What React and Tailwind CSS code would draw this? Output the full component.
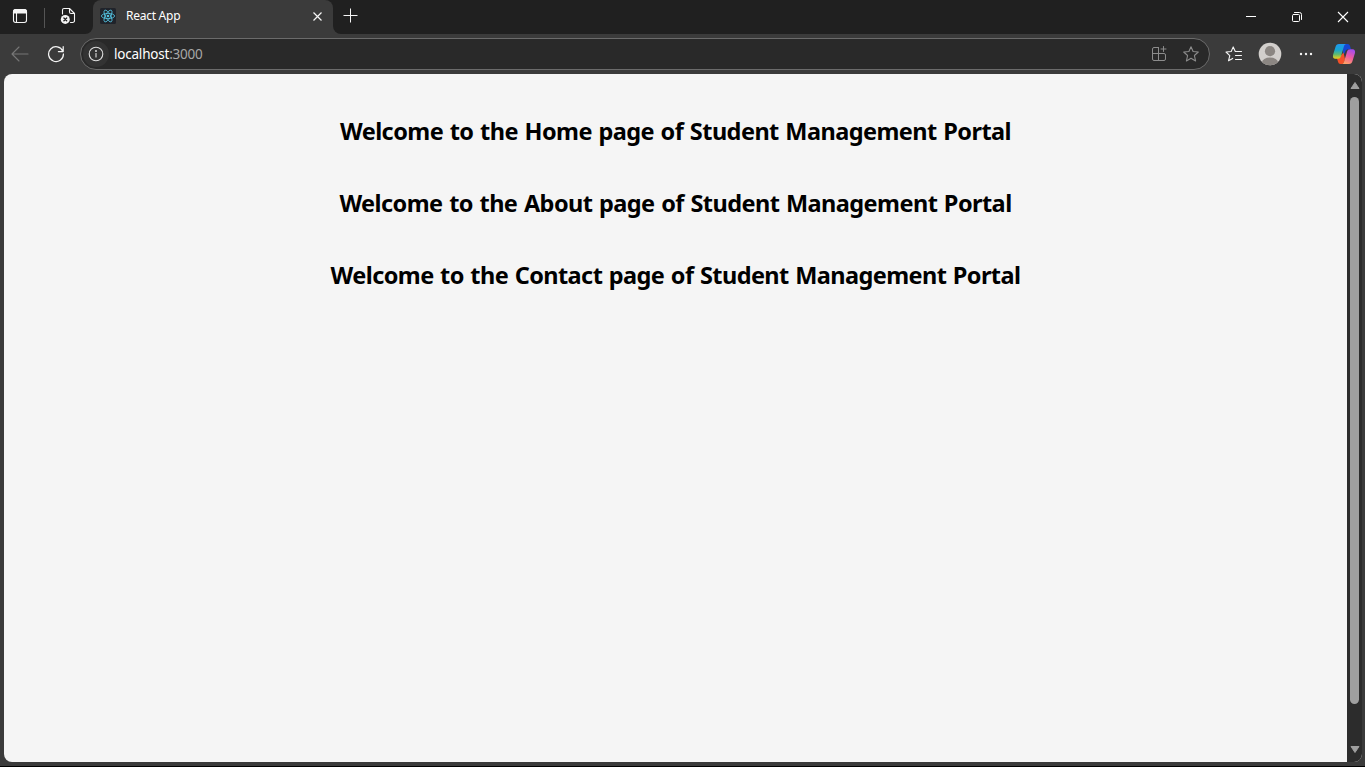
import React from "react";

const line = { fill: "none", strokeLinecap: "round", strokeLinejoin: "round" };

function WorkspacesIcon() {
  return (
    <svg width="16" height="16" viewBox="0 0 16 16" {...line} stroke="#f5f5f5" strokeWidth="1.1">
      <rect x="1.5" y="1.5" width="13" height="13" rx="2.2" />
      <path d="M1.5 5V3.7a2.2 2.2 0 0 1 2.2-2.2h8.6a2.2 2.2 0 0 1 2.2 2.2V5z" fill="#f5f5f5" />
      <path d="M4.5 5v9.5" />
    </svg>
  );
}

function TabActionsIcon() {
  return (
    <svg width="16" height="18" viewBox="0 0 16 18" {...line} stroke="#f5f5f5" strokeWidth="1.1">
      <path d="M2.5 7V3A1.5 1.5 0 0 1 4 1.5h5.5l5 5v7.2a1.8 1.8 0 0 1-1.8 1.8H10.5M9.5 1.5V5A1.5 1.5 0 0 0 11 6.5h3.5" />
      <circle cx="5.3" cy="12.4" r="4.5" fill="#f5f5f5" stroke="none" />
      <path d="M3.9 11l2.800 2.800M6.700 11l-2.800 2.800" stroke="#202020" strokeWidth="1.300" />
    </svg>
  );
}

function ReactLogo() {
  return (
    <svg width="16" height="16" viewBox="0 0 16 16" fill="none" stroke="#53c1de" strokeWidth="0.85">
      <rect width="16" height="16" rx="1.5" fill="#20232a" stroke="none" />
      <ellipse cx="8" cy="8" rx="6.600" ry="2.600" />
      <ellipse cx="8" cy="8" rx="6.600" ry="2.600" transform="rotate(60 8 8)" />
      <ellipse cx="8" cy="8" rx="6.600" ry="2.600" transform="rotate(120 8 8)" />
      <circle cx="8" cy="8" r="1.300" fill="#53c1de" stroke="none" />
    </svg>
  );
}

function CopilotLogo() {
  return (
    <svg width="24" height="22" viewBox="0 0 24 22">
      <defs>
        <linearGradient id="cool" x1="0" y1="0" x2="0" y2="1">
          <stop offset="0" stopColor="#2098f0" />
          <stop offset="0.400" stopColor="#18a5cf" />
          <stop offset="0.700" stopColor="#61b96e" />
          <stop offset="1" stopColor="#f5cf18" />
        </linearGradient>
        <linearGradient id="warm" x1="0.700" y1="0" x2="0.300" y2="1">
          <stop offset="0" stopColor="#a24cf0" />
          <stop offset="0.500" stopColor="#ee5aa0" />
          <stop offset="1" stopColor="#ffa264" />
        </linearGradient>
      </defs>
      <path d="M11 1h4.600c1.400 0 2 .8 2.400 2l1 3.200h-2.600c-1.900 0-2.700 1-3.300 2.700L11 13z" fill="#1646d2" />
      <path d="M6.500 15l5-5.500L13 16l-1.200 3.400c-.4 1.100-1 1.600-2.200 1.600H8.500c-1.400 0-2-.7-2.400-2L5 15.500z" fill="#f45028" />
      <path d="M7 1h7c-1.300.3-1.800 1.500-2.200 2.800L9 13.300C8.500 15 7.500 15.800 5.800 15.800H3.500C1.300 15.800.5 14 1.100 11.700L3.400 4.200C4 2 5.100 1 7 1z" fill="url(#cool)" />
      <path d="M17 21h-7c1.300-.3 1.800-1.500 2.200-2.800L15 8.700c.5-1.700 1.500-2.500 3.200-2.500h2.300c2.200 0 3 1.800 2.400 4.100l-2.300 7.500C20 20 18.900 21 17 21z" fill="url(#warm)" />
    </svg>
  );
}

function TitleBar() {
  return (
    <header className="flex h-[34px] shrink-0 bg-[#3b3b3b]">
      <div className="flex w-[93px] items-center rounded-br-lg bg-[#202020] pb-[2px] pl-3">
        <WorkspacesIcon />
        <div className="ml-4 mt-[3px] h-[20px] w-px bg-[#555555]" />
        <div className="ml-[15px]"><TabActionsIcon /></div>
      </div>
      <div className="w-[240px] bg-[#202020]">
        <div className="flex h-full items-center rounded-t-lg bg-[#3b3b3b] pb-[2px] pl-[7px] pr-[10px]">
          <ReactLogo />
          <span className="ml-[10px] text-[12px] leading-4 tracking-[-0.26px] text-white">React App</span>
          <svg className="ml-auto mt-px" width="11" height="11" viewBox="0 0 11 11" stroke="#f5f5f5" strokeWidth="1.200">
            <path d="M1.500 1.500l8 8M9.500 1.500l-8 8" />
          </svg>
        </div>
      </div>
      <div className="flex flex-1 rounded-bl-lg bg-[#202020] pl-[10px]">
        <svg className="mt-[8px]" width="15" height="15" viewBox="0 0 15 15" stroke="#f5f5f5" strokeWidth="1">
          <path d="M.5 7.500h14M7.500.5v14" />
        </svg>
        <div className="-mr-px ml-auto flex">
          <div className="flex w-[46px] justify-center pt-[16px]">
            <div className="h-px w-[10px] bg-white" />
          </div>
          <div className="flex w-[46px] justify-center pt-[11px]">
            <svg width="12" height="12" viewBox="0 0 12 12" {...line} stroke="#fff">
              <rect x="1.500" y="3.500" width="7" height="7" rx="1" />
              <path d="M3.500 1.500h5a2 2 0 0 1 2 2v5" />
            </svg>
          </div>
          <div className="flex w-[46px] justify-center pt-[11px]">
            <svg width="12" height="12" viewBox="0 0 12 12" stroke="#fff" strokeWidth="1.100">
              <path d="M1 1l10 10M11 1L1 11" />
            </svg>
          </div>
        </div>
      </div>
    </header>
  );
}

function Toolbar() {
  return (
    <div className="flex h-10 shrink-0 items-center bg-[#3b3b3b]">
      <svg className="ml-[11px]" width="18" height="16" viewBox="0 0 18 16" {...line} stroke="#777777" strokeWidth="1.100">
        <path d="M8 1L1 8l7 7M1 8h16" />
      </svg>
      <svg className="ml-[18px]" width="18" height="18" viewBox="0 0 18 18" {...line} stroke="#f5f5f5" strokeWidth="1.250">
        <path d="M15.800 6.200A7.400 7.400 0 1 0 16.400 9M16.200 1.700v4.800h-4.800" />
      </svg>
      <div className="ml-[15px] flex h-8 w-[1130px] items-center rounded-full border border-[#6b6b6b] bg-[#292929] pl-[2px] pr-[10px]">
        <div className="flex size-[26px] items-center justify-center rounded-full bg-[#333333]">
          <svg width="16" height="16" viewBox="0 0 16 16" {...line} stroke="#dedede" strokeWidth="1.100">
            <circle cx="8" cy="8" r="6.800" />
            <path d="M8 7.500v3.500" />
            <circle cx="8" cy="5" r=".4" fill="#dedede" />
          </svg>
        </div>
        <div className="ml-[5px] text-[13.5px] leading-5 tracking-[-0.21px] text-white">
          localhost<span className="text-[#a7a7a7]">:3000</span>
        </div>
        <svg className="ml-auto" width="16" height="16" viewBox="0 0 16 16" {...line} stroke="#8c8c8c">
          <path d="M7.500 1.500H3a1.500 1.500 0 0 0-1.500 1.500v10A1.500 1.500 0 0 0 3 14.500h10a1.500 1.500 0 0 0 1.500-1.500V9A1.500 1.500 0 0 0 13 7.500H1.500M7.500 1.500v13M12.500.5v5M10 3h5" />
        </svg>
        <svg className="ml-4" width="16" height="16" viewBox="0 0 16 16" {...line} stroke="#8c8c8c" strokeWidth="1.100">
          <path d="M8 .8l2.100 4.700 5.200.5-3.900 3.500 1.200 5.500L8 12.300 3.400 15l1.200-5.500L.7 6l5.200-.5z" />
        </svg>
      </div>
      <svg className="ml-[15px]" width="18" height="16" viewBox="0 0 18 16" {...line} stroke="#f5f5f5" strokeWidth="1.100">
        <path d="M11 5.500H10.300L8.200.9 6.200 5.500 1 6l3.800 3.600L3.500 14.800l4.200-2.400M11.500 5.500h5M10.500 9.500h6M10.500 13.500h6" />
      </svg>
      <svg className="ml-[15px]" width="24" height="24" viewBox="0 0 24 24">
        <clipPath id="avatar"><circle cx="12" cy="12" r="11.300" /></clipPath>
        <g clipPath="url(#avatar)">
          <rect width="24" height="24" fill="#d2cfcc" />
          <circle cx="12" cy="9.200" r="5.100" fill="#8b8682" />
          <ellipse cx="12" cy="20.500" rx="8" ry="5" fill="#8b8682" />
        </g>
      </svg>
      <svg className="ml-[17px]" width="14" height="4" viewBox="0 0 14 4" fill="#f5f5f5">
        <circle cx="2" cy="2" r="1.200" /><circle cx="7" cy="2" r="1.200" /><circle cx="12" cy="2" r="1.200" />
      </svg>
      <div className="ml-[19px]"><CopilotLogo /></div>
    </div>
  );
}

function Scrollbar() {
  return (
    <div className="flex w-[15px] flex-col items-center bg-[#2c2c2c] pb-[8px] pt-[7px]">
      <svg width="10" height="9" viewBox="0 0 10 9" fill="#9f9f9f" stroke="#9f9f9f" strokeLinejoin="round">
        <path d="M5 1.500L9 7.500H1z" />
      </svg>
      <div className="mt-[7px] h-[607px] w-[9px] rounded-full bg-[#9f9f9f]" />
      <svg className="mt-auto" width="10" height="9" viewBox="0 0 10 9" fill="#9f9f9f" stroke="#9f9f9f" strokeLinejoin="round">
        <path d="M5 7.500L1 1.500h8z" />
      </svg>
    </div>
  );
}

export default function App() {
  return (
    <div className="flex h-[767px] w-[1365px] flex-col overflow-hidden border-b border-black bg-[#3b3b3b] font-['Noto_Sans','Open_Sans',sans-serif]">
      <TitleBar />
      <Toolbar />
      <div className="ml-1 mr-[3px] flex h-[688px] overflow-hidden rounded-lg bg-[#f5f5f5]">
        <main className="flex flex-1 flex-col items-center gap-10 pt-[41px] text-[23.5px] font-bold leading-8 text-black [word-spacing:1px]">
          <h2 className="whitespace-nowrap tracking-[-0.55px]">Welcome to the Home page of Student Management Portal</h2>
          <h2 className="whitespace-nowrap tracking-[-0.55px]">Welcome to the About page of Student Management Portal</h2>
          <h2 className="whitespace-nowrap tracking-[-0.58px]">Welcome to the Contact page of Student Management Portal</h2>
        </main>
        <Scrollbar />
      </div>
    </div>
  );
}
